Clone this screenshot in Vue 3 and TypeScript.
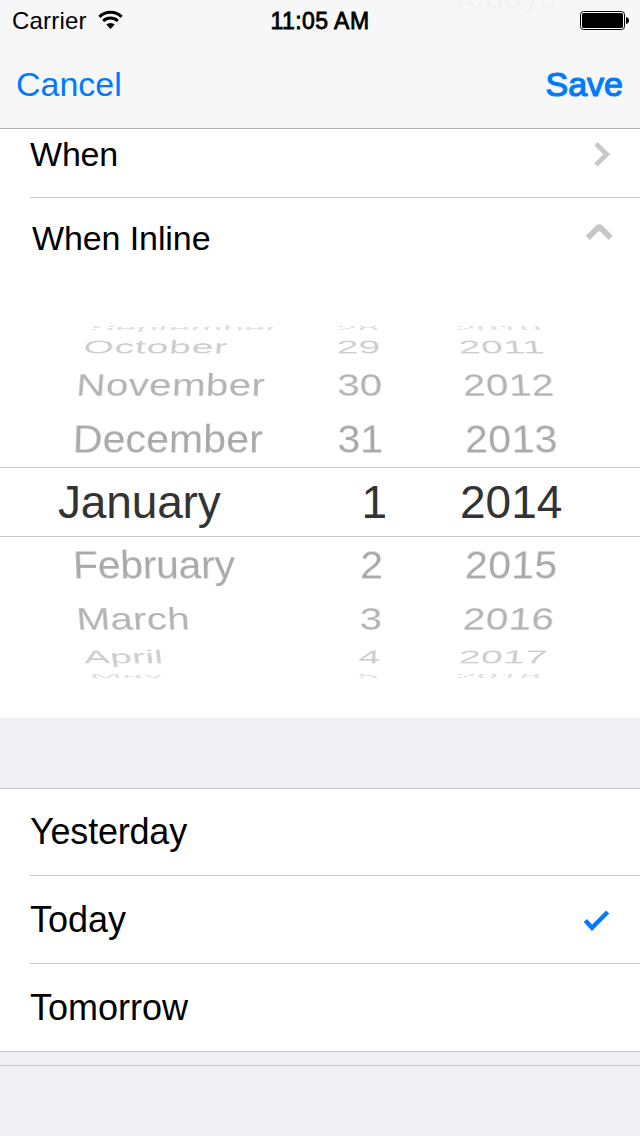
<script setup lang="ts">
interface WheelRow {
  month: string
  day: string
  year: string
  y: number
  scaleX: number
  scaleY: number
  tilt: number
  spacing: number
  color: string
}

const rows: WheelRow[] = [
  { month: 'September', day: '28', year: '2010', y: 328, scaleX: 0.932, scaleY: 0.17, tilt: -0.00035, spacing: 0.2, color: '#dedede' },
  { month: 'October', day: '29', year: '2011', y: 346.7, scaleX: 0.957, scaleY: 0.46, tilt: -0.00032, spacing: 0.7, color: '#cdcdcd' },
  { month: 'November', day: '30', year: '2012', y: 385, scaleX: 0.986, scaleY: 0.76, tilt: -0.00026, spacing: 0.3, color: '#b3b3b3' },
  { month: 'December', day: '31', year: '2013', y: 439, scaleX: 1, scaleY: 0.96, tilt: -0.00015, spacing: 0.1, color: '#a9a9a9' },
  { month: 'February', day: '2', year: '2015', y: 564.6, scaleX: 1, scaleY: 0.96, tilt: 0.00015, spacing: -0.3, color: '#a9a9a9' },
  { month: 'March', day: '3', year: '2016', y: 618.5, scaleX: 0.986, scaleY: 0.76, tilt: 0.00026, spacing: 0.2, color: '#b3b3b3' },
  { month: 'April', day: '4', year: '2017', y: 657.3, scaleX: 0.957, scaleY: 0.46, tilt: 0.00032, spacing: 0.2, color: '#cdcdcd' },
  { month: 'May', day: '5', year: '2018', y: 676.4, scaleX: 0.932, scaleY: 0.17, tilt: 0.00035, spacing: 0.4, color: '#dedede' },
]

const WHEEL_TOP = 325

function wheelStyle(r: WheelRow) {
  return {
    top: `${r.y - WHEEL_TOP - 30}px`,
    color: r.color,
    transform: `matrix3d(${r.scaleX},0,0,0, 0,${r.scaleY},0,${r.tilt}, 0,0,1,0, 0,0,0,1)`,
  }
}

const options = [
  { label: 'Yesterday', checked: false },
  { label: 'Today', checked: true },
  { label: 'Tomorrow', checked: false },
]
</script>

<template>
  <main class="screen">
    <header class="top">
      <span class="ghost" aria-hidden="true">Todays</span>
      <div class="status">
        <div class="carrier">
          <span>Carrier</span>
          <svg width="26" height="20" viewBox="0 0 26 20" fill="none" stroke="#000">
            <path d="M1.4 6.8 A16 16 0 0 1 23.6 6.8" stroke-width="3.1" />
            <path d="M5.2 11 A10.6 10.6 0 0 1 19.8 11" stroke-width="3" />
            <path d="M12.5 19 L8.3 14.6 A6 6 0 0 1 16.7 14.6 Z" fill="#000" stroke="none" />
          </svg>
        </div>
        <span class="time">11:05 AM</span>
        <svg class="battery" width="50" height="20" viewBox="0 0 50 20">
          <rect x="0.5" y="0.5" width="44" height="18" rx="3" fill="#fff" stroke="#000" />
          <rect x="2" y="2" width="41" height="15" rx="1.6" fill="#000" />
          <path d="M46 6 Q49 6.6 49 9.5 Q49 12.4 46 13 Z" fill="#000" />
        </svg>
      </div>
      <nav class="nav">
        <span>Cancel</span>
        <span class="save">Save</span>
      </nav>
    </header>

    <section class="when">
      <span>When</span>
      <svg width="20" height="30" viewBox="0 0 20 30" fill="none">
        <polyline points="5,4.7 15.7,15.3 5,25.9" stroke="#c7c7cc" stroke-width="4.8" />
      </svg>
    </section>
    <section class="inline">
      <span>When Inline</span>
      <svg width="30" height="20" viewBox="0 0 30 20" fill="none">
        <polyline points="2.8,15.8 14.3,4.7 25.8,15.8" stroke="#c7c7c7" stroke-width="5.8" stroke-linejoin="bevel" />
      </svg>
    </section>

    <section class="picker">
      <div class="wheel">
        <div v-for="r in rows" :key="r.month" class="row" :style="wheelStyle(r)">
          <span class="month" :style="{ letterSpacing: `${r.spacing}px` }">{{ r.month }}</span>
          <span class="day">{{ r.day }}</span>
          <span class="year">{{ r.year }}</span>
        </div>
      </div>
      <div class="selected">
        <span class="month">January</span>
        <span class="day">1</span>
        <span class="year">2014</span>
      </div>
    </section>

    <section class="options">
      <div v-for="o in options" :key="o.label" class="option">
        <span>{{ o.label }}</span>
        <svg v-if="o.checked" width="30" height="24" viewBox="0 0 30 24" fill="none">
          <polyline points="5.3,12.6 12,19.8 27.7,4" stroke="#007aff" stroke-width="4.4" />
        </svg>
      </div>
    </section>
    <div class="rule"></div>
  </main>
</template>

<style>
body {
  background: #efeff4;
}
</style>

<style scoped>
.screen {
  width: 640px;
  height: 1136px;
  overflow: hidden;
  background: #efeff4;
  color: #000;
  font-family: "Liberation Sans", Arial, sans-serif;
  font-size: 34px;
}
.screen svg {
  display: block;
  flex: none;
}
.top {
  position: relative;
  box-sizing: border-box;
  height: 129px;
  overflow: hidden;
  background: #f7f7f7;
  border-bottom: 1px solid #b2b2b2;
}
.ghost {
  position: absolute;
  left: 449px;
  top: -24px;
  line-height: 40px;
  color: #f2f2f2;
}
.status {
  position: relative;
  display: grid;
  grid-template-columns: 1fr auto 1fr;
  height: 40px;
  padding: 0 10px 0 12px;
  font-size: 24px;
  line-height: 42px;
}
.carrier {
  display: flex;
  gap: 11px;
  letter-spacing: 0.2px;
}
.carrier svg {
  margin-top: 10px;
}
.time {
  font-size: 23px;
  letter-spacing: 0.45px;
  margin-left: -2px;
  -webkit-text-stroke: 0.8px #000;
}
.battery {
  justify-self: end;
  margin-top: 11px;
}
.nav {
  position: relative;
  display: flex;
  justify-content: space-between;
  padding: 0 17px 0 16px;
  line-height: 88px;
  color: #007aff;
}
.save {
  -webkit-text-stroke: 1.2px #007aff;
}
.when,
.inline {
  display: flex;
  justify-content: space-between;
  background: #fff;
}
.when {
  height: 68px;
  padding: 0 29px 0 30px;
  line-height: 50px;
  letter-spacing: -0.2px;
  position: relative;
}
.when::after {
  content: "";
  position: absolute;
  left: 30px;
  right: 0;
  bottom: -1px;
  height: 1px;
  background: #c8c7cc;
}
.when svg {
  margin-top: 10px;
}
.inline {
  height: 88px;
  padding: 0 25px 0 32px;
  line-height: 82px;
  letter-spacing: -0.1px;
}
.inline svg {
  margin-top: 25px;
}
.picker {
  position: relative;
  height: 433px;
  background: #fff;
}
.wheel {
  position: absolute;
  top: 40px;
  left: 0;
  width: 640px;
  height: 353px;
  overflow: hidden;
}
.row,
.selected {
  display: grid;
  box-sizing: border-box;
  width: 640px;
  white-space: nowrap;
}
.row {
  grid-template-columns: 233px 77px 1fr;
  position: absolute;
  left: 0;
  height: 60px;
  padding-left: 73px;
  font-size: 41px;
  line-height: 60px;
  transform-origin: 320px 30px;
}
.day {
  text-align: right;
}
.row .year {
  padding-left: 82px;
  letter-spacing: 0.4px;
}
.selected {
  grid-template-columns: 251px 78px 1fr;
  position: absolute;
  top: 182px;
  left: 0;
  height: 70px;
  padding-left: 58px;
  border-top: 1px solid #c8c8c8;
  border-bottom: 1px solid #c8c8c8;
  background: #fff;
  font-size: 46px;
  line-height: 68px;
  color: #333;
}
.selected .month {
  letter-spacing: -0.15px;
}
.selected .year {
  padding-left: 73px;
}
.options {
  margin-top: 70px;
  border-top: 1px solid #c8c7cc;
  border-bottom: 1px solid #c8c7cc;
  background: #fff;
}
.option {
  display: flex;
  align-items: center;
  justify-content: space-between;
  height: 87px;
  margin-left: 30px;
  padding-right: 30px;
  font-size: 36px;
}
.option:not(:first-child) {
  border-top: 1px solid #c8c7cc;
}
.option:first-child {
  height: 86px;
  letter-spacing: -0.2px;
}
.rule {
  height: 13px;
  border-bottom: 1px solid #c8c7cc;
}
</style>
